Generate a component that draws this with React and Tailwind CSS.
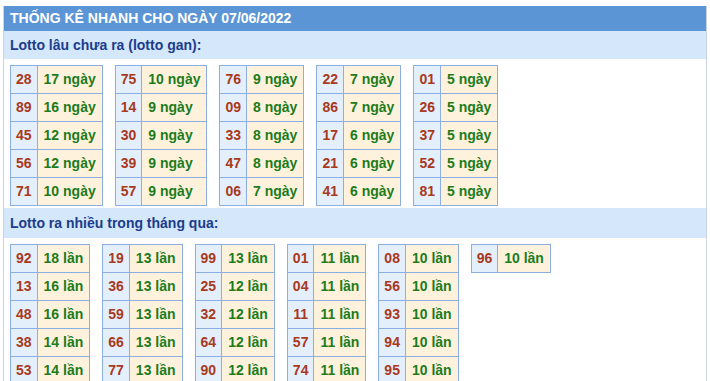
const gan = [
  [["28", "17"], ["89", "16"], ["45", "12"], ["56", "12"], ["71", "10"]],
  [["75", "10"], ["14", "9"], ["30", "9"], ["39", "9"], ["57", "9"]],
  [["76", "9"], ["09", "8"], ["33", "8"], ["47", "8"], ["06", "7"]],
  [["22", "7"], ["86", "7"], ["17", "6"], ["21", "6"], ["41", "6"]],
  [["01", "5"], ["26", "5"], ["37", "5"], ["52", "5"], ["81", "5"]],
];

const nhieu = [
  [["92", "18"], ["13", "16"], ["48", "16"], ["38", "14"], ["53", "14"]],
  [["19", "13"], ["36", "13"], ["59", "13"], ["66", "13"], ["77", "13"]],
  [["99", "13"], ["25", "12"], ["32", "12"], ["64", "12"], ["90", "12"]],
  [["01", "11"], ["04", "11"], ["11", "11"], ["57", "11"], ["74", "11"]],
  [["08", "10"], ["56", "10"], ["93", "10"], ["94", "10"], ["95", "10"]],
  [["96", "10"]],
];

const LottoTable = ({ rows, unit }) => (
  <table className="border-collapse font-['Liberation_Sans',Arial,sans-serif] text-[14px] font-bold">
    <tbody>
      {rows.map(([num, count], i) => (
        <tr key={i} className="h-[28px]">
          <td className="border border-[#8daee0] bg-[#e4effc] px-[5px] text-center text-[#a8391c]">
            {num}
          </td>
          <td className="border border-[#8daee0] bg-[#fff2dd] px-[6px] text-[#1c7c1c] whitespace-nowrap">
            {count} {unit}
          </td>
        </tr>
      ))}
    </tbody>
  </table>
);

const SubHeader = ({ children, className }) => (
  <div className={"flex items-center bg-[#d4e7fb] px-[6px] text-[14px] font-bold text-[#1b3c8c] " + className}>
    {children}
  </div>
);

export default function App() {
  return (
    <div className="w-[710px] h-[381px] overflow-hidden bg-white pt-[6px] font-['Liberation_Sans',Arial,sans-serif]">
      <div className="ml-[3px] w-[704px] border-l border-r border-[#c9d3de]">
        <div className="h-[25px] flex items-center bg-[#5b95d5] px-[6px] text-[14px] font-bold text-white">
          THỐNG KÊ NHANH CHO NGÀY 07/06/2022
        </div>
        <SubHeader className="h-[28px]">Lotto lâu chưa ra (lotto gan):</SubHeader>
        <div className="flex flex-wrap items-start gap-[12px] px-[6px] pt-[6px]">
          {gan.map((rows, i) => (
            <LottoTable key={i} rows={rows} unit="ngày" />
          ))}
        </div>
        <SubHeader className="h-[30px] mt-[2px]">Lotto ra nhiều trong tháng qua:</SubHeader>
        <div className="flex flex-wrap items-start gap-[12px] px-[6px] pt-[6px]">
          {nhieu.map((rows, i) => (
            <LottoTable key={i} rows={rows} unit="lần" />
          ))}
        </div>
      </div>
    </div>
  );
}
